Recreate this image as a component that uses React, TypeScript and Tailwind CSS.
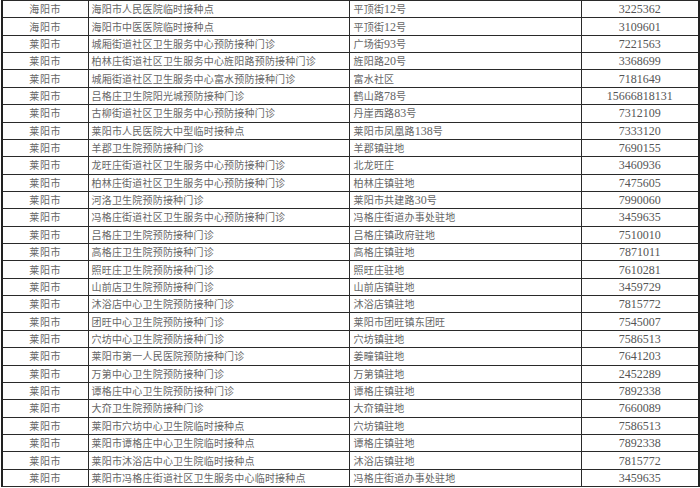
import React from "react";

const rows: [string, string, string, string][] = [
  ["海阳市", "海阳市人民医院临时接种点", "平顶街12号", "3225362"],
  ["海阳市", "海阳市中医医院临时接种点", "平顶街12号", "3109601"],
  ["莱阳市", "城厢街道社区卫生服务中心预防接种门诊", "广场街93号", "7221563"],
  ["莱阳市", "柏林庄街道社区卫生服务中心旌阳路预防接种门诊", "旌阳路20号", "3368699"],
  ["莱阳市", "城厢街道社区卫生服务中心富水预防接种门诊", "富水社区", "7181649"],
  ["莱阳市", "吕格庄卫生院阳光城预防接种门诊", "鹤山路78号", "15666818131"],
  ["莱阳市", "古柳街道社区卫生服务中心预防接种门诊", "丹崖西路83号", "7312109"],
  ["莱阳市", "莱阳市人民医院大中型临时接种点", "莱阳市凤凰路138号", "7333120"],
  ["莱阳市", "羊郡卫生院预防接种门诊", "羊郡镇驻地", "7690155"],
  ["莱阳市", "龙旺庄街道社区卫生服务中心预防接种门诊", "北龙旺庄", "3460936"],
  ["莱阳市", "柏林庄街道社区卫生服务中心预防接种门诊", "柏林庄镇驻地", "7475605"],
  ["莱阳市", "河洛卫生院预防接种门诊", "莱阳市共建路30号", "7990060"],
  ["莱阳市", "冯格庄街道社区卫生服务中心预防接种门诊", "冯格庄街道办事处驻地", "3459635"],
  ["莱阳市", "吕格庄卫生院预防接种门诊", "吕格庄镇政府驻地", "7510010"],
  ["莱阳市", "高格庄卫生院预防接种门诊", "高格庄镇驻地", "7871011"],
  ["莱阳市", "照旺庄卫生院预防接种门诊", "照旺庄驻地", "7610281"],
  ["莱阳市", "山前店卫生院预防接种门诊", "山前店镇驻地", "3459729"],
  ["莱阳市", "沐浴店中心卫生院预防接种门诊", "沐浴店镇驻地", "7815772"],
  ["莱阳市", "团旺中心卫生院预防接种门诊", "莱阳市团旺镇东团旺", "7545007"],
  ["莱阳市", "穴坊中心卫生院预防接种门诊", "穴坊镇驻地", "7586513"],
  ["莱阳市", "莱阳市第一人民医院预防接种门诊", "姜疃镇驻地", "7641203"],
  ["莱阳市", "万第中心卫生院预防接种门诊", "万第镇驻地", "2452289"],
  ["莱阳市", "谭格庄中心卫生院预防接种门诊", "谭格庄镇驻地", "7892338"],
  ["莱阳市", "大夼卫生院预防接种门诊", "大夼镇驻地", "7660089"],
  ["莱阳市", "莱阳市穴坊中心卫生院临时接种点", "穴坊镇驻地", "7586513"],
  ["莱阳市", "莱阳市谭格庄中心卫生院临时接种点", "谭格庄镇驻地", "7892338"],
  ["莱阳市", "莱阳市沐浴店中心卫生院临时接种点", "沐浴店镇驻地", "7815772"],
  ["莱阳市", "莱阳市冯格庄街道社区卫生服务中心临时接种点", "冯格庄街道办事处驻地", "3459635"],
];

function Mixed({ text }: { text: string }) {
  const parts = text.split(/(\d+)/).filter((p) => p.length > 0);
  return (
    <>
      {parts.map((p, i) =>
        /^\d+$/.test(p) ? (
          <span key={i} className="font-['Liberation_Serif',serif] text-[12px]">
            {p}
          </span>
        ) : (
          <span key={i} className="tracking-[0.2px]">{p}</span>
        )
      )}
    </>
  );
}

export default function App() {
  return (
    <div className="w-[700px] h-[488px] overflow-hidden bg-white">
      <div className="pl-[1px]">
        <table className="table-fixed border-collapse w-[697px] border-l-2 border-r-2 border-[#222] font-['Noto_Sans_CJK_SC',sans-serif] text-[10px] text-[#666]">
          <colgroup>
            <col className="w-[86px]" />
            <col className="w-[261px]" />
            <col className="w-[232px]" />
            <col className="w-[118px]" />
          </colgroup>
          <tbody>
            {rows.map((r, i) => (
              <tr key={i} className="h-[17.36px]">
                <td className="border border-[#2a2a2a] text-center p-0 leading-none whitespace-nowrap">
                  <span className="tracking-[0.6px]">{r[0]}</span>
                </td>
                <td className="border border-[#2a2a2a] text-left pl-[3px] p-0 leading-none whitespace-nowrap overflow-hidden">
                  <Mixed text={r[1]} />
                </td>
                <td className="border border-[#2a2a2a] text-left pl-[4px] p-0 leading-none whitespace-nowrap overflow-hidden">
                  <Mixed text={r[2]} />
                </td>
                <td className="border border-[#2a2a2a] text-center p-0 leading-none whitespace-nowrap font-['Liberation_Serif',serif] text-[12px] text-[#555]">
                  {r[3]}
                </td>
              </tr>
            ))}
          </tbody>
        </table>
      </div>
    </div>
  );
}
